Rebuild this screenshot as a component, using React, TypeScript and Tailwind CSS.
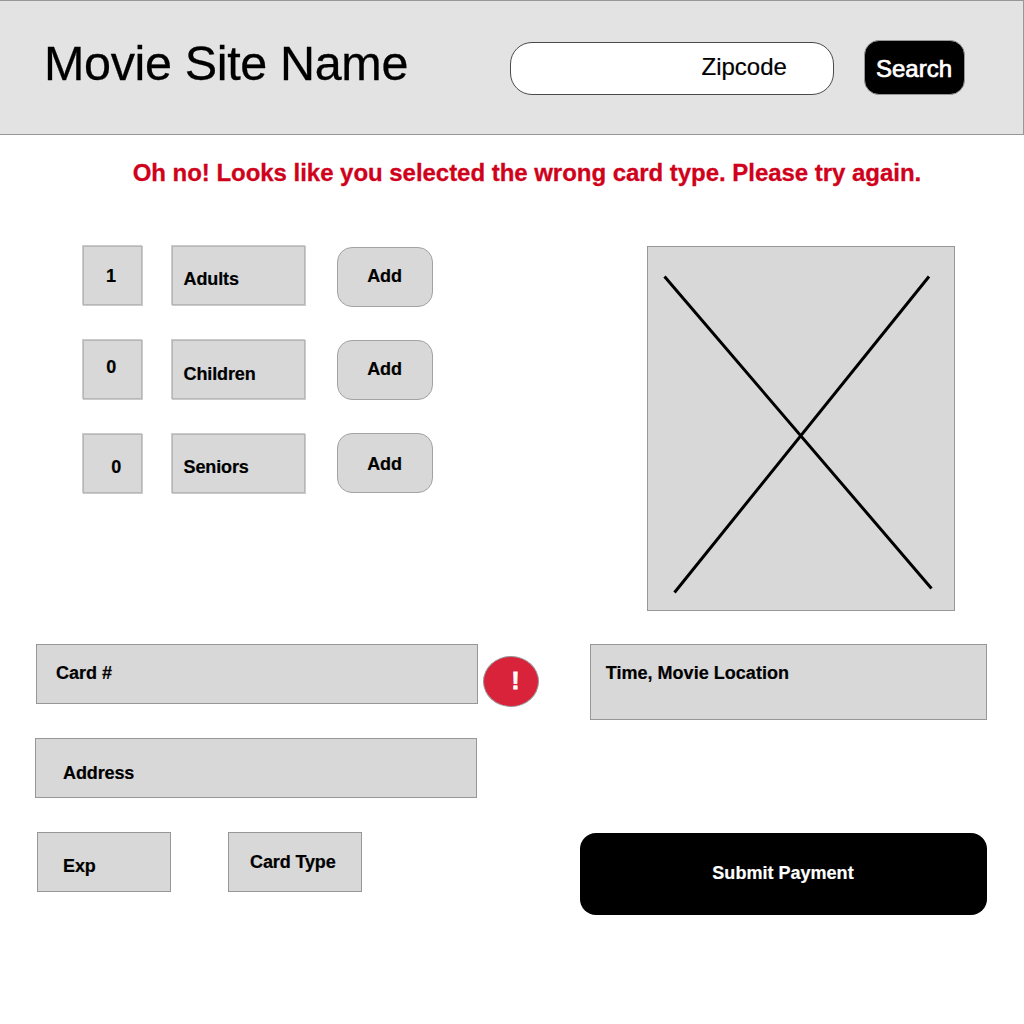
import type { ReactNode } from "react";

type Ticket = {
  count: number;
  label: string;
  countClass: string;
  labelClass: string;
  buttonClass: string;
};

const tickets: Ticket[] = [
  { count: 1, label: "Adults", countClass: "pt-[19px] pl-[22px]", labelClass: "pt-[22px]", buttonClass: "mt-px pt-[18px]" },
  { count: 0, label: "Children", countClass: "pt-[16px] pl-[22.3px]", labelClass: "pt-[23px]", buttonClass: "pt-[18px]" },
  { count: 0, label: "Seniors", countClass: "pt-[22px] pl-[27.3px]", labelClass: "pt-[22px]", buttonClass: "-mt-px pt-[20px]" },
];

function Box({ className, children }: { className: string; children?: ReactNode }) {
  return <div className={`shrink-0 border border-[#979797] bg-[#d8d8d8] ${className}`}>{children}</div>;
}

/* Box with a softer two-tone outline */
function SoftBox({ className, children }: { className: string; children?: ReactNode }) {
  return (
    <div
      className={`shrink-0 border border-t-[#b7b7b7] border-r-[#cbcbcb] border-b-[#cbcbcb] border-l-[#b7b7b7] bg-[#d8d8d8] shadow-[-1px_-1px_0_#cbcbcb,inset_-1px_-1px_0_#b7b7b7] ${className}`}
    >
      {children}
    </div>
  );
}

function Header() {
  return (
    <header className="flex h-[135px] border-y border-r border-[#979797] bg-[#e3e3e3]">
      <h1 className="mt-[34px] ml-[44px] w-[466px] text-[48.5px] leading-[56px] tracking-[-0.35px] whitespace-nowrap [-webkit-text-stroke:0.3px_black]">
        Movie Site Name
      </h1>
      <div className="mt-[41px] h-[53px] w-[324px] rounded-[22px] border border-[#4a4a4a] bg-white pt-[10px] pl-[190.5px] text-[24px] leading-[28px] [-webkit-text-stroke:0.2px_black]">
        Zipcode
      </div>
      <button className="mt-[39px] ml-[30px] flex h-[55px] w-[101px] items-start justify-center rounded-[15px] border border-[#979797] bg-black pt-[14px] pr-px text-[24px] leading-[28px] text-white [-webkit-text-stroke:0.7px_white]">
        Search
      </button>
    </header>
  );
}

function TicketRow({ ticket }: { ticket: Ticket }) {
  return (
    <div className="flex h-[60px] items-start">
      <SoftBox className={`h-[60px] w-[60px] ${ticket.countClass}`}>{ticket.count}</SoftBox>
      <SoftBox className={`ml-[29px] h-[60px] w-[134px] pl-[10.5px] ${ticket.labelClass}`}>{ticket.label}</SoftBox>
      <button
        className={`ml-[31px] flex h-[60px] w-[96px] shrink-0 items-start justify-center rounded-[15px] border border-[#a3a3a3] bg-[#d8d8d8] pr-px ${ticket.buttonClass}`}
      >
        Add
      </button>
    </div>
  );
}

function PosterPlaceholder() {
  return (
    <Box className="ml-[67px] h-[365px] w-[308px]">
      <svg className="block" width="306" height="363" viewBox="648 247 306 363" fill="none" stroke="#000" strokeWidth="3">
        <path d="M664.5 276.5 931.5 588.5M929 276.5 674.5 592.5" />
      </svg>
    </Box>
  );
}

export default function App() {
  return (
    <div className="h-[1024px] w-[1024px] overflow-hidden bg-white font-['Liberation_Sans',Arial,sans-serif] text-black">
      <Header />
      <p className="mt-[24px] pl-[132.7px] text-[24px] leading-[28px] font-bold tracking-[-0.035px] whitespace-nowrap text-[#d0021b] [-webkit-text-stroke:0.3px_#d0021b]">
        Oh no! Looks like you selected the wrong card type. Please try again.
      </p>
      <main className="mt-[59px] flex text-[18px] leading-[20px] font-bold tracking-[-0.12px] [-webkit-text-stroke:0.2px]">
        <div className="w-[580px] shrink-0">
          <section className="flex h-[398px] flex-col gap-[34px] pl-[83px]">
            {tickets.map((ticket) => (
              <TicketRow key={ticket.label} ticket={ticket} />
            ))}
          </section>
          <section className="flex flex-col gap-[34px] pl-[35px]">
            <div className="flex h-[60px] items-start pl-px">
              <Box className="h-[60px] w-[442px] pt-[18px] pl-[19px] tracking-normal">Card #</Box>
              <div className="mt-[12px] ml-[5px] h-[51px] w-[56px] rounded-[50%] border border-[#979797] bg-[#d9233a] pt-[10px] pl-[27.5px] text-[24px] leading-[28px] text-white [-webkit-text-stroke:0.8px_white]">
                !
              </div>
            </div>
            <Box className="h-[60px] w-[442px] pt-[24px] pl-[27px]">Address</Box>
            <div className="flex gap-[57px] pl-[2px]">
              <Box className="h-[60px] w-[134px] pt-[23px] pl-[25px]">Exp</Box>
              <Box className="h-[60px] w-[134px] pt-[19px] pl-[21px]">Card Type</Box>
            </div>
          </section>
        </div>
        <aside className="flex flex-col">
          <PosterPlaceholder />
          <Box className="mt-[33px] ml-[10px] h-[76px] w-[397px] pt-[18px] pl-[14.7px] tracking-[0.03px]">
            Time, Movie Location
          </Box>
          <button className="mt-[113px] flex h-[82px] w-[407px] items-start justify-center rounded-[16px] bg-black pt-[30px] pr-px tracking-[0.02px] text-white">
            Submit Payment
          </button>
        </aside>
      </main>
    </div>
  );
}
